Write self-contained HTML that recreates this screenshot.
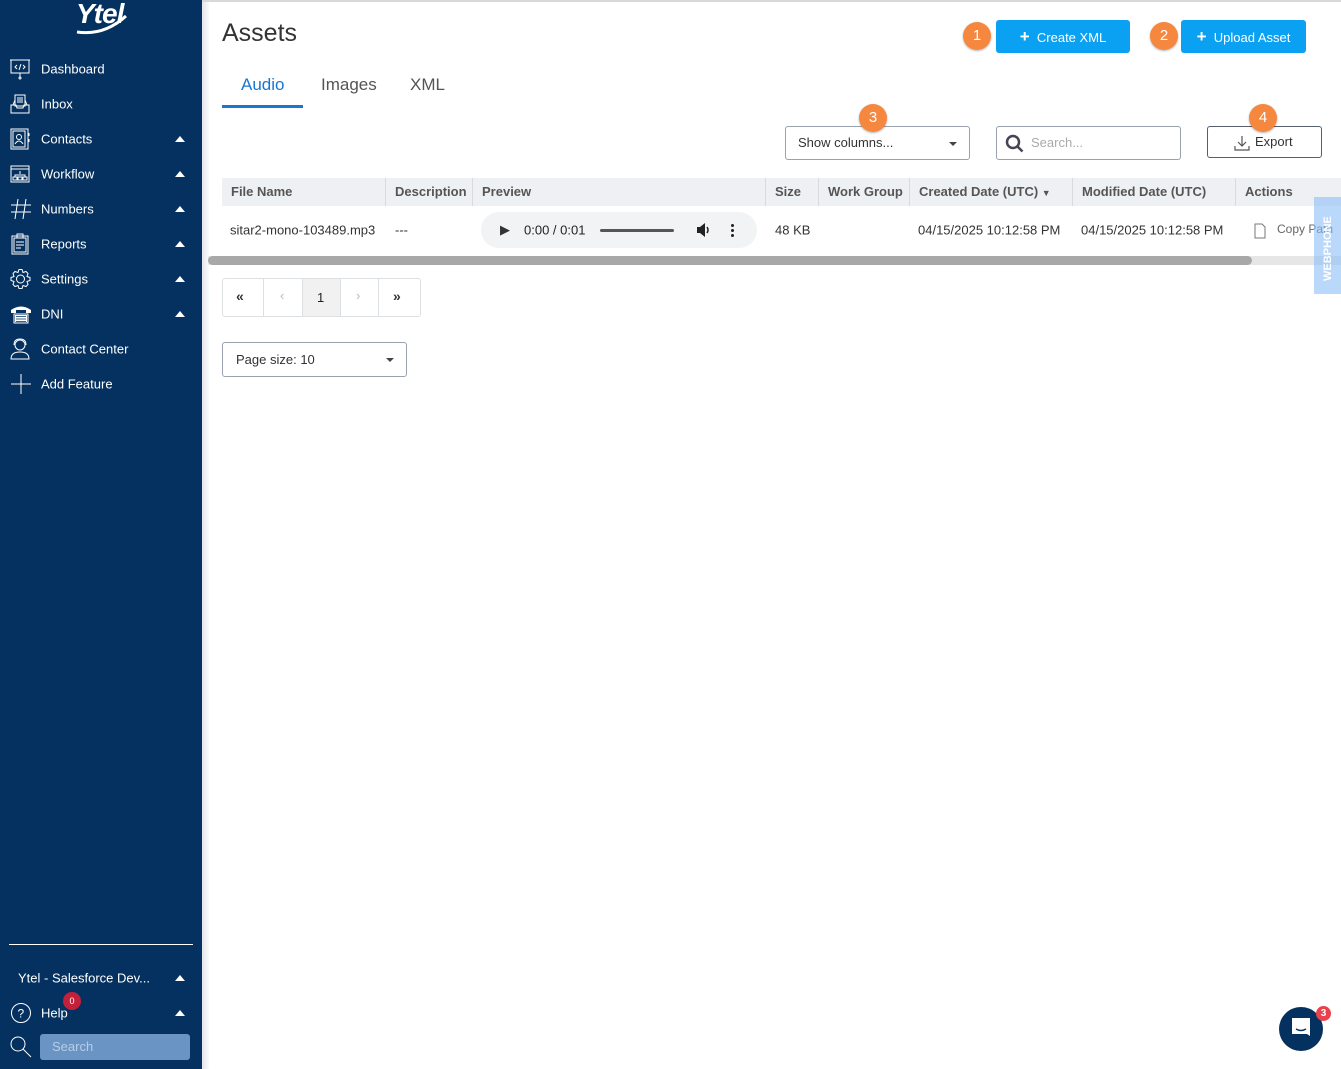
<!DOCTYPE html>
<html><head><meta charset="utf-8"><style>
*{box-sizing:border-box;margin:0;padding:0}
body{width:1341px;height:1069px;overflow:hidden;background:#fff;font-family:"Liberation Sans",sans-serif;position:relative;color:#333}
.abs{position:absolute}
#sb{left:0;top:0;width:202px;height:1069px;background:#04315f;color:#fff}
#shade{left:202px;top:0;width:7px;height:1069px;background:linear-gradient(90deg,#e4e6ea,#fafafa)}
#topline{left:202px;top:0;right:0;height:2px;background:#d8d8d8}
.nav{position:absolute;left:0;width:202px;height:35px;font-size:13px;color:#fff}
.nav span.t{position:absolute;left:41px;top:50%;transform:translateY(-50%)}
.nav svg{position:absolute;left:10px;top:50%;transform:translateY(-50%)}
.tri{position:absolute;left:175px;top:50%;margin-top:-3px;width:0;height:0;border-left:5px solid transparent;border-right:5px solid transparent;border-bottom:6px solid #fff}
.btn{position:absolute;background:#0aa1f2;color:#fff;font-size:13px;border-radius:3px;height:33px;line-height:33px;text-align:center}
.badge{position:absolute;width:28px;height:28px;border-radius:50%;background:#f5873f;color:#fff;font-size:15px;text-align:center;line-height:28px;box-shadow:0 1px 2px rgba(0,0,0,.3)}
.box{position:absolute;border:1px solid #9aa3ad;border-radius:3px;background:#fff;font-size:13px}
.hd{position:absolute;top:178px;height:28px;background:#eef1f4;font-size:13px;color:#555;font-weight:bold;line-height:28px;padding-left:9px;border-right:1px solid #d7dbe0}
.cell{position:absolute;top:230px;font-size:13px;color:#333;transform:translateY(-50%)}
</style></head><body>
<div id="sb" class="abs">
  <div class="abs" style="left:76px;top:-2px;font-size:28px;font-weight:bold;font-style:italic;letter-spacing:-1px;color:#fff">Ytel</div>
  <svg class="abs" style="left:74px;top:14px" width="58" height="22"><path d="M3 18 Q30 22 52 2" stroke="#fff" stroke-width="3" fill="none"/></svg>

  <div class="nav" style="top:51px"><svg width="20" height="22" fill="none" stroke="#fff" stroke-width="1"><rect x="1" y="2" width="18" height="13"/><path d="M0 2h20M7 7l-2 2 2 2M13 7l2 2-2 2M9 12l2-6M10 15v4"/><circle cx="10" cy="20" r="1"/></svg><span class="t">Dashboard</span></div>
  <div class="nav" style="top:86px"><svg width="20" height="20" fill="none" stroke="#fff" stroke-width="1"><rect x="5" y="1" width="10" height="11"/><path d="M7 4h6M7 6h6M7 8h6M1 11h5l1 3h6l1-3h5v8H1zM3 11l2-5M17 11l-2-5"/></svg><span class="t">Inbox</span></div>
  <div class="nav" style="top:121px"><svg width="20" height="22" fill="none" stroke="#fff" stroke-width="1"><rect x="1" y="1" width="17" height="20"/><rect x="3" y="3" width="12" height="16"/><circle cx="9" cy="9" r="2.5"/><path d="M5 16q4-6 8 0M19 5v3M19 11v3"/></svg><span class="t">Contacts</span><i class="tri"></i></div>
  <div class="nav" style="top:156px"><svg width="20" height="18" fill="none" stroke="#fff" stroke-width="1"><rect x="1" y="1" width="18" height="16"/><path d="M1 4h18M10 6v3M5 12v-2h10v2"/><rect x="3" y="12" width="4" height="3"/><rect x="8" y="12" width="4" height="3"/><rect x="13" y="12" width="4" height="3"/></svg><span class="t">Workflow</span><i class="tri"></i></div>
  <div class="nav" style="top:191px"><svg width="22" height="22" fill="none" stroke="#fff" stroke-width="1"><path d="M8 1L5 21M16 1L13 21M1 7h20M1 14h20"/></svg><span class="t">Numbers</span><i class="tri"></i></div>
  <div class="nav" style="top:226px"><svg width="20" height="22" fill="none" stroke="#fff" stroke-width="1"><rect x="2" y="3" width="16" height="18"/><rect x="4" y="5" width="12" height="14"/><rect x="7" y="1" width="6" height="4"/><path d="M6 9h8M6 12h8M6 15h5"/></svg><span class="t">Reports</span><i class="tri"></i></div>
  <div class="nav" style="top:261px"><svg width="21" height="21" fill="none" stroke="#fff" stroke-width="1"><circle cx="10.5" cy="10.5" r="4"/><path d="M9 1h3l1 3 3-1 2 2-1 3 3 1v3l-3 1 1 3-2 2-3-1-1 3H9l-1-3-3 1-2-2 1-3-3-1V9l3-1-1-3 2-2 3 1z"/></svg><span class="t">Settings</span><i class="tri"></i></div>
  <div class="nav" style="top:296px"><svg width="22" height="20" fill="#fff"><path d="M1 6q10-7 20 0v3h-5V6H6v3H1z"/><rect x="4" y="10" width="14" height="9" fill="none" stroke="#fff"/><rect x="5" y="11" width="12" height="7"/><path d="M6 12.5h10M6 15h10M6 17.5h10" stroke="#04315f" stroke-width=".8"/></svg><span class="t">DNI</span><i class="tri"></i></div>
  <div class="nav" style="top:331px"><svg width="20" height="22" fill="none" stroke="#fff" stroke-width="1"><circle cx="10" cy="7" r="5"/><path d="M4 7q0-6 6-6t6 6M1 21q0-7 9-7t9 7z"/></svg><span class="t">Contact Center</span></div>
  <div class="nav" style="top:366px"><svg width="22" height="22" fill="none" stroke="#fff" stroke-width="1"><path d="M11 1v20M1 11h20"/></svg><span class="t">Add Feature</span></div>

  <div class="abs" style="left:9px;top:944px;width:184px;height:1px;background:#fff"></div>
  <div class="nav" style="top:960px"><span class="t" style="left:18px">Ytel - Salesforce Dev...</span><i class="tri"></i></div>
  <div class="nav" style="top:995px"><svg width="22" height="22" fill="none" stroke="#fff" stroke-width="1"><circle cx="11" cy="11" r="9.5"/><text x="7.5" y="15.5" fill="#fff" stroke="none" font-size="12" font-family="Liberation Sans">?</text></svg><span class="t">Help</span><i class="tri"></i></div>
  <div class="abs" style="left:63px;top:992px;width:18px;height:18px;border-radius:50%;background:#c4203a;font-size:9px;text-align:center;line-height:18px">0</div>
  <svg class="abs" style="left:10px;top:1036px" width="22" height="22" fill="none" stroke="#fff" stroke-width="1"><circle cx="8" cy="8" r="7"/><path d="M13 13l8 8"/></svg>
  <div class="abs" style="left:40px;top:1034px;width:150px;height:26px;background:#6a94c4;border-radius:3px;color:#b7cde6;font-size:13px;line-height:26px;padding-left:12px">Search</div>
</div>
<div id="shade" class="abs"></div>
<div id="topline" class="abs"></div>

<div class="abs" style="left:222px;top:19px;font-size:25px;color:#333;font-weight:300">Assets</div>
<div class="abs" style="left:241px;top:75px;font-size:17px;color:#1976d2">Audio</div>
<div class="abs" style="left:222px;top:105px;width:81px;height:3px;background:#1976d2"></div>
<div class="abs" style="left:321px;top:75px;font-size:17px;color:#555">Images</div>
<div class="abs" style="left:410px;top:75px;font-size:17px;color:#555">XML</div>

<div class="badge" style="left:963px;top:22px">1</div>
<div class="btn" style="left:996px;top:20px;width:134px"><b style="font-size:17px">+</b>&nbsp; Create XML</div>
<div class="badge" style="left:1150px;top:22px">2</div>
<div class="btn" style="left:1181px;top:20px;width:125px"><b style="font-size:17px">+</b>&nbsp; Upload Asset</div>

<div class="box" style="left:785px;top:126px;width:185px;height:34px;line-height:32px;padding-left:12px">Show columns...<i style="position:absolute;right:12px;top:15px;border-left:4px solid transparent;border-right:4px solid transparent;border-top:4px solid #444"></i></div>
<div class="badge" style="left:859px;top:104px">3</div>
<div class="box" style="left:996px;top:126px;width:185px;height:34px;line-height:32px;padding-left:34px;color:#aaa">Search...
<svg style="position:absolute;left:8px;top:7px" width="20" height="20" fill="none" stroke="#445" stroke-width="2.5"><circle cx="8" cy="8" r="6"/><path d="M12.5 12.5l5 5"/></svg></div>
<div class="box" style="left:1207px;top:126px;width:115px;height:32px;line-height:30px;padding-left:47px;border-color:#55606b">Export
<svg style="position:absolute;left:26px;top:8px" width="16" height="16" fill="none" stroke="#555" stroke-width="1.2"><path d="M8 1v10M4 7l4 4 4-4M1 11v4h14v-4"/></svg></div>
<div class="badge" style="left:1249px;top:104px">4</div>

<div class="hd" style="left:222px;width:164px">File Name</div>
<div class="hd" style="left:386px;width:87px">Description</div>
<div class="hd" style="left:473px;width:293px">Preview</div>
<div class="hd" style="left:766px;width:53px">Size</div>
<div class="hd" style="left:819px;width:91px">Work Group</div>
<div class="hd" style="left:910px;width:163px">Created Date (UTC) <span style="font-size:9px">&#9660;</span></div>
<div class="hd" style="left:1073px;width:163px">Modified Date (UTC)</div>
<div class="hd" style="left:1236px;width:105px;border-right:none">Actions</div>

<div class="cell" style="left:230px">sitar2-mono-103489.mp3</div>
<div class="cell" style="left:395px">---</div>
<div class="abs" style="left:481px;top:212px;width:276px;height:36px;border-radius:18px;background:#f1f3f4"></div>
<div class="cell" style="left:500px;font-size:13px">&#9654;</div>
<div class="cell" style="left:524px;color:#222">0:00 / 0:01</div>
<div class="abs" style="left:600px;top:229px;width:74px;height:3px;border-radius:2px;background:#555"></div>
<svg class="abs" style="left:696px;top:223px" width="16" height="14"><path d="M1 4h3l5-4v14l-5-4H1z" fill="#222"/><path d="M11 4q2 3 0 6" stroke="#222" stroke-width="1.5" fill="none"/></svg>
<div class="abs" style="left:731px;top:224px;width:3px;height:3px;background:#222;border-radius:50%;box-shadow:0 5px 0 #222,0 10px 0 #222"></div>
<div class="cell" style="left:775px">48 KB</div>
<div class="cell" style="left:918px">04/15/2025 10:12:58 PM</div>
<div class="cell" style="left:1081px">04/15/2025 10:12:58 PM</div>
<svg class="abs" style="left:1254px;top:223px" width="12" height="16" fill="none" stroke="#777"><path d="M1 1h7l3 3v11H1z"/></svg>
<div class="cell" style="left:1277px;color:#666;font-size:12px;top:229px">Copy Path</div>

<div class="abs" style="left:208px;top:256px;width:1133px;height:9px;background:#e6e6e6"></div>
<div class="abs" style="left:208px;top:256px;width:1044px;height:9px;background:#a8a8a8;border-radius:5px"></div>

<div class="abs" style="left:1314px;top:197px;width:27px;height:97px;background:rgba(140,190,245,.6)"></div>
<div class="abs" style="left:1322px;top:281px;transform:rotate(-90deg);transform-origin:0 0;color:#fff;font-size:11px;font-weight:bold;width:80px">WEBPHONE</div>

<div class="abs" style="left:222px;top:278px;width:199px;height:39px;border:1px solid #dde0e3;border-radius:3px"></div>
<div class="abs" style="left:302px;top:279px;width:38px;height:37px;background:#f1f1f1"></div>
<div class="abs" style="left:263px;top:279px;width:1px;height:37px;background:#dde0e3"></div>
<div class="abs" style="left:302px;top:279px;width:1px;height:37px;background:#dde0e3"></div>
<div class="abs" style="left:340px;top:279px;width:1px;height:37px;background:#dde0e3"></div>
<div class="abs" style="left:378px;top:279px;width:1px;height:37px;background:#dde0e3"></div>
<div class="abs" style="left:236px;top:288px;font-size:14px;font-weight:bold;color:#333">&laquo;</div>
<div class="abs" style="left:280px;top:288px;font-size:13px;color:#bbb">&lsaquo;</div>
<div class="abs" style="left:317px;top:290px;font-size:13px;color:#222">1</div>
<div class="abs" style="left:356px;top:288px;font-size:13px;color:#bbb">&rsaquo;</div>
<div class="abs" style="left:393px;top:288px;font-size:14px;font-weight:bold;color:#333">&raquo;</div>

<div class="box" style="left:222px;top:342px;width:185px;height:35px;line-height:33px;padding-left:13px">Page size: 10<i style="position:absolute;right:12px;top:15px;border-left:4px solid transparent;border-right:4px solid transparent;border-top:4px solid #444"></i></div>

<div class="abs" style="left:1279px;top:1007px;width:44px;height:44px;border-radius:50%;background:#04315f"></div>
<svg class="abs" style="left:1290px;top:1017px" width="22" height="24"><path d="M2 1h18v18l-3-2H2z" fill="#fff"/><path d="M6 12q5 3 10 0" stroke="#04315f" stroke-width="1.5" fill="none"/></svg>
<div class="abs" style="left:1316px;top:1006px;width:15px;height:15px;border-radius:50%;background:#e8424f;color:#fff;font-size:10px;font-weight:bold;text-align:center;line-height:15px">3</div>
</body></html>
